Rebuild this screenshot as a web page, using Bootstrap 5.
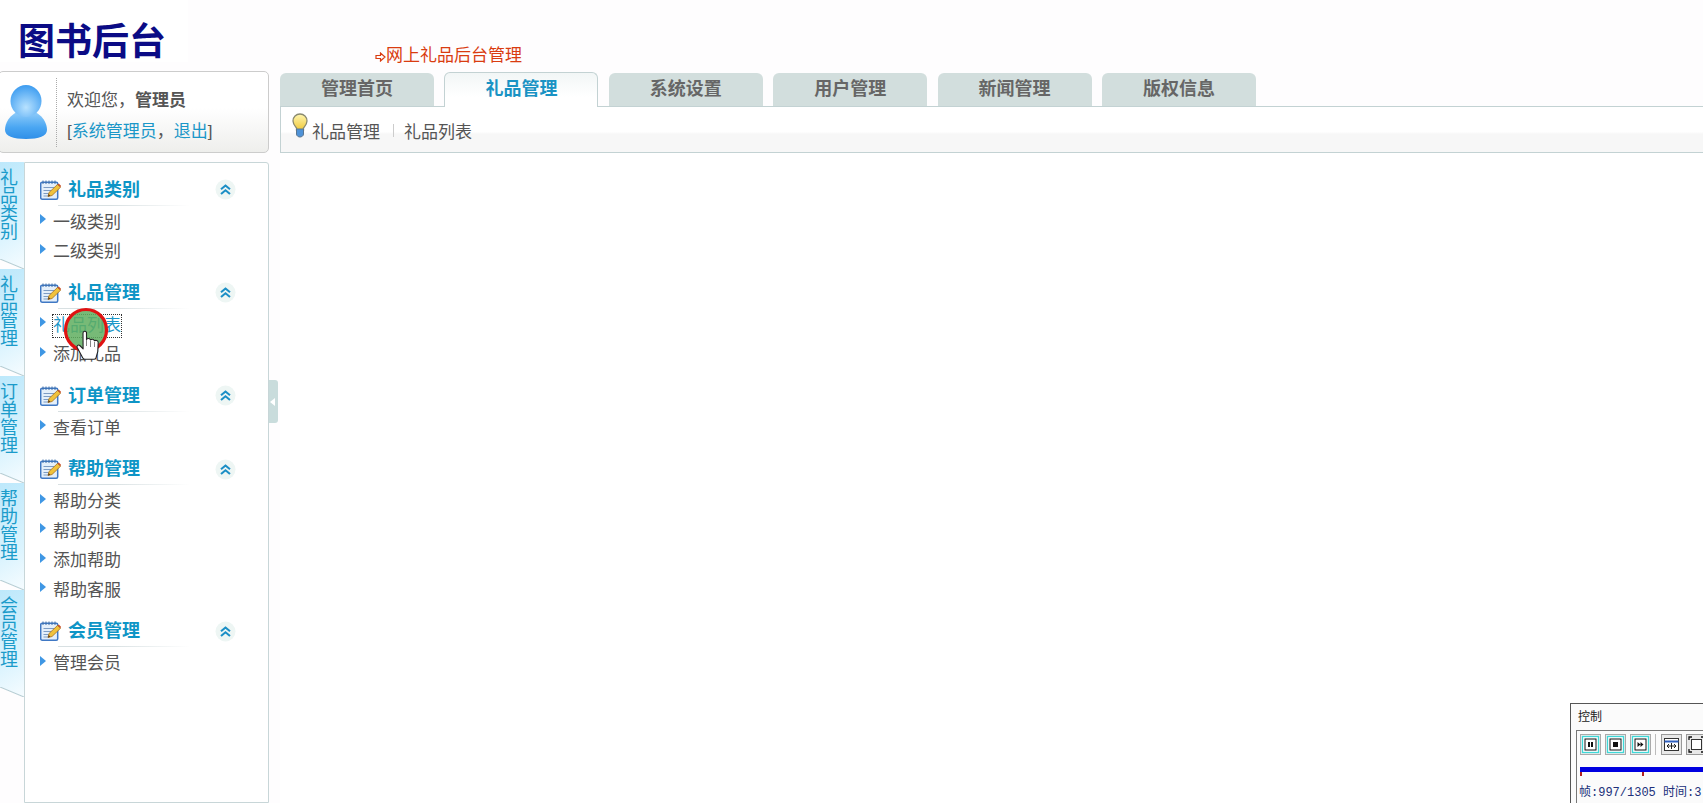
<!DOCTYPE html>
<html lang="zh">
<head>
<meta charset="utf-8">
<title>图书后台</title>
<link href="https://cdn.jsdelivr.net/npm/bootstrap@5.3.0/dist/css/bootstrap.min.css" rel="stylesheet">
<style>
html,body{height:803px;overflow:hidden}
body{background:#fefdfe;font-family:"Liberation Sans","Noto Sans CJK SC",sans-serif;font-size:17px;color:#555;position:relative}
.sprites{width:0;height:0;display:block}
.shell{height:803px}
.left-col{width:271px;margin-left:-2px;flex:none}
.logo-box{width:190px;height:62px;background:#fff;padding:24px 0 0 20px;margin-bottom:9px;font-size:37px;line-height:37px;font-weight:700;color:#0b0b85;white-space:nowrap}
.user-box{height:82px;border:1px solid #ccc;border-radius:5px;background:linear-gradient(#fff 45%,#eeeeec);padding-left:5px}
.avatar{width:44px;height:56px;margin-top:12px;flex:none}
.user-text{border-left:1px dotted #aaa;margin:6px 0 5px 8px;padding-left:10px;line-height:31px;padding-top:7px;white-space:nowrap}
.user-text b{color:#555}
.user-text a{color:#1b97c8;text-decoration:none}
.side{height:641px;margin-top:9px;margin-left:2px}
.strip{width:24px;flex:none}
.strip-tab{height:107px;padding-top:6px;position:relative;background:linear-gradient(150deg,#bde8fb,#dcf4fe 65%,#f6fcff);color:#1b9bca;font-size:18px}
.strip-tab::after{content:"";position:absolute;left:0;right:0;bottom:0;height:10px;background:linear-gradient(to top right,#fefdfe calc(50% - 1px),#b5ccd2 50%,transparent calc(50% + 1px))}
.strip-text{writing-mode:vertical-rl;text-orientation:upright;line-height:18px;margin-left:-2px;white-space:nowrap;display:block}
.panel{flex:1;border:1px solid #c8d6d8;border-radius:0 3px 0 0;background:#fff;padding:11.500px 32px 0 15px}
.grp{margin-bottom:11px}
.grp-head{height:30px}
.grp-title{font-size:18px;font-weight:700;color:#0e95c6;line-height:30px;margin-left:7px}
.note-ic{width:21px;height:20px;flex:none}
.chev-ic{width:21px;height:21px;flex:none;margin-left:auto}
.grp-line{height:1px;margin:0 0 2px 18px;width:132px;background:linear-gradient(90deg,#d8e0e2,#d8e0e2 40%,#fff)}
.grp-list{margin:0}
.grp-list li{height:29.5px;padding-left:13px;position:relative;white-space:nowrap}
.grp-list li::before{content:"";position:absolute;left:0;top:6.500px;border-left:6px solid #3f97e4;border-top:5px solid transparent;border-bottom:5px solid transparent}
.grp-list a{color:#555;text-decoration:none;display:block;width:fit-content;height:22px;line-height:22px;margin-top:4px}
.grp-list li{padding-top:.1px}
.grp-list a.focus-item{outline:1px dotted #333;outline-offset:0;color:#1b97c8}
.splitter{width:9px;height:43px;margin-top:380px;flex:none;background:#c9dcdc;border-radius:0 3px 3px 0}
.main-col{flex:1;min-width:0;margin-left:2px;background:linear-gradient(#fefdfe 106px,#fff 106px)}
.top-title{padding:43px 0 0 95px;height:72px;line-height:26px;color:#d93c10;white-space:nowrap}
.arrow-ic{width:11px;height:10px}
.tabs{gap:10.4px;height:34px;flex-wrap:nowrap;position:relative}
.tab-item{width:154px;height:33px;margin-top:1px;background:#d2dedd;border-radius:6px 6px 0 0;text-align:center;font-size:18px;font-weight:700;line-height:33px;color:#666;text-decoration:none}
.tab-item.on{height:35px;margin-top:0;background:linear-gradient(#f2f6f6,#fff 70%);border:1px solid #c3d2d3;border-bottom:0;color:#1a93c4;line-height:32px;position:relative;z-index:1}
.crumb-bar{height:47px;border:1px solid #c3d2d3;border-right:0;background:linear-gradient(#fff 55%,#f7f7f7 60%);padding-left:11px}
.bulb-ic{width:16px;height:25px;margin-top:6px;flex:none}
.crumb{line-height:26px;margin-top:13px;color:#555}
.crumb-sep{width:1px;height:13px;background:#ccc;margin:17px 10px 0 13px}
.click-mark{position:absolute;left:63px;top:306px;width:48px;height:60px;pointer-events:none}
.ctl-win{position:absolute;left:1570px;top:703px;width:150px;height:100px;border:1px solid #555;border-bottom:0;background:#fbfbfb;padding:5px 5px 0;font-size:12px;color:#222;overflow:hidden}
.ctl-title{line-height:16px;padding:0 2px;margin-bottom:5px}
.ctl-inner{border:1px solid #777;border-bottom:0;height:80px;padding:3px 3px}
.ctl-btn{width:21px;height:21px;display:block;flex:none}
.ctl-sep{width:2px;height:21px;border-left:1px solid #bbb;margin:0 4px 0 4px}
.ctl-track{height:5px;background:#0000e0;margin-top:12px}
.ctl-ticks{height:5px;position:relative}
.ctl-ticks i{position:absolute;top:0;width:2px;height:4px;background:#b02020}
.ctl-info{font-family:"Liberation Mono","Noto Sans CJK SC",monospace;color:#20307a;line-height:14px;margin-top:9px;white-space:nowrap;margin-left:-1px}
</style>
</head>
<body>
<svg class="sprites" aria-hidden="true">
  <defs>
    <radialGradient id="headG" cx="50%" cy="70%" r="70%"><stop offset="0" stop-color="#b8e2ff"/><stop offset="1" stop-color="#3c9cf0"/></radialGradient>
    <linearGradient id="bodyG" x1="0" y1="0" x2="0" y2="1"><stop offset="0" stop-color="#9ad2fb"/><stop offset=".6" stop-color="#4aa6f2"/><stop offset="1" stop-color="#2f8fe8"/></linearGradient>
    <linearGradient id="bulbG" x1="0" y1="0" x2="0" y2="1"><stop offset="0" stop-color="#fff6b0"/><stop offset="1" stop-color="#f0c93a"/></linearGradient>
    <symbol id="noteS" viewBox="0 0 21 20">
      <rect x=".7" y="2.200" width="17" height="17" rx="1.500" fill="#e4effa" stroke="#3f78c4" stroke-width="1.500"/>
      <path d="M3 .5v3.500M6 .5v3.500M9 .5v3.500M12 .5v3.500M15 .5v3.500" stroke="#3f6fa8" stroke-width="1"/>
      <path d="M3.500 7.500h11M3.500 10.500h8M3.500 13.500h6M3.500 16h5" stroke="#7d9cc4" stroke-width="1"/>
      <path d="M8 16.500l1-4L17.500 4.500l3 2.800L12 15.500z" fill="#f0c23c" stroke="#a8701c" stroke-width=".8"/>
      <path d="M17.500 4.500l3 2.800 .5-1.600-2.200-2.200z" fill="#c8502a"/>
      <path d="M8 16.500l.6-2.400 1.800 1.700z" fill="#5a3c1c"/>
    </symbol>
    <symbol id="chevS" viewBox="0 0 21 21">
      <circle cx="10.500" cy="10.500" r="10" fill="#eef6f4"/>
      <path d="M6 10.200l4.500-3.700 4.500 3.700M6 15l4.500-3.700L15 15" fill="none" stroke="#1c8fc6" stroke-width="2.100"/>
    </symbol>
  </defs>
</svg>

<div class="shell d-flex">
  <div class="left-col d-flex flex-column">
    <div class="logo-box">图书后台</div>
    <div class="user-box d-flex">
      <svg class="avatar" viewBox="0 0 44 56">
        <path d="M22 26C10 26 1 36 1 46c0 6 8 9 21 9s21-3 21-9c0-10-9-20-21-20z" fill="url(#bodyG)"/>
        <ellipse cx="22" cy="17" rx="15.500" ry="16" fill="url(#headG)"/>
      </svg>
      <div class="user-text">欢迎您，<b>管理员</b><br>[<a href="#">系统管理员</a>，<a href="#">退出</a>]</div>
    </div>
    <div class="side d-flex">
      <div class="strip">
        <div class="strip-tab"><span class="strip-text">礼品类别</span></div>
        <div class="strip-tab"><span class="strip-text">礼品管理</span></div>
        <div class="strip-tab"><span class="strip-text">订单管理</span></div>
        <div class="strip-tab"><span class="strip-text">帮助管理</span></div>
        <div class="strip-tab"><span class="strip-text">会员管理</span></div>
      </div>
      <div class="panel">
        <div class="grp">
          <div class="grp-head d-flex align-items-center"><svg class="note-ic"><use href="#noteS"/></svg><span class="grp-title">礼品类别</span><svg class="chev-ic"><use href="#chevS"/></svg></div>
          <div class="grp-line"></div>
          <ul class="grp-list list-unstyled"><li><a href="#">一级类别</a></li><li><a href="#">二级类别</a></li></ul>
        </div>
        <div class="grp">
          <div class="grp-head d-flex align-items-center"><svg class="note-ic"><use href="#noteS"/></svg><span class="grp-title">礼品管理</span><svg class="chev-ic"><use href="#chevS"/></svg></div>
          <div class="grp-line"></div>
          <ul class="grp-list list-unstyled"><li><a href="#" class="focus-item">礼品列表</a></li><li><a href="#">添加礼品</a></li></ul>
        </div>
        <div class="grp">
          <div class="grp-head d-flex align-items-center"><svg class="note-ic"><use href="#noteS"/></svg><span class="grp-title">订单管理</span><svg class="chev-ic"><use href="#chevS"/></svg></div>
          <div class="grp-line"></div>
          <ul class="grp-list list-unstyled"><li><a href="#">查看订单</a></li></ul>
        </div>
        <div class="grp">
          <div class="grp-head d-flex align-items-center"><svg class="note-ic"><use href="#noteS"/></svg><span class="grp-title">帮助管理</span><svg class="chev-ic"><use href="#chevS"/></svg></div>
          <div class="grp-line"></div>
          <ul class="grp-list list-unstyled"><li><a href="#">帮助分类</a></li><li><a href="#">帮助列表</a></li><li><a href="#">添加帮助</a></li><li><a href="#">帮助客服</a></li></ul>
        </div>
        <div class="grp">
          <div class="grp-head d-flex align-items-center"><svg class="note-ic"><use href="#noteS"/></svg><span class="grp-title">会员管理</span><svg class="chev-ic"><use href="#chevS"/></svg></div>
          <div class="grp-line"></div>
          <ul class="grp-list list-unstyled"><li><a href="#">管理会员</a></li></ul>
        </div>
      </div>
    </div>
  </div>
  <div class="splitter d-flex align-items-center">
    <svg width="7" height="10" viewBox="0 0 7 10"><path d="M1 5l5-4v8z" fill="#fff"/></svg>
  </div>
  <div class="main-col">
    <div class="top-title"><svg class="arrow-ic" viewBox="0 0 11 10"><path d="M1 3.500h4.500V1L10 5 5.500 9V6.500H1z" fill="none" stroke="#d93c10" stroke-width="1.200"/></svg>网上礼品后台管理</div>
    <nav class="nav tabs">
      <a class="tab-item" href="#">管理首页</a>
      <a class="tab-item on" href="#">礼品管理</a>
      <a class="tab-item" href="#">系统设置</a>
      <a class="tab-item" href="#">用户管理</a>
      <a class="tab-item" href="#">新闻管理</a>
      <a class="tab-item" href="#">版权信息</a>
    </nav>
    <div class="crumb-bar d-flex">
      <svg class="bulb-ic" viewBox="0 0 16 25">
        <path d="M8 1C4 1 1 4 1 8c0 3 2 5 3.500 7v2h7v-2C13 13 15 11 15 8c0-4-3-7-7-7z" fill="url(#bulbG)" stroke="#8a8a70" stroke-width="1.300"/>
        <path d="M4.500 16h7v5c0 2-2 3-3.500 3s-3.500-1-3.500-3z" fill="#4f93d8" stroke="#5a7690" stroke-width="1"/>
      </svg>
      <span class="crumb ms-1">礼品管理</span>
      <span class="crumb-sep"></span>
      <span class="crumb">礼品列表</span>
    </div>
  </div>
</div>

<svg class="click-mark" viewBox="0 0 48 60">
  <circle cx="23" cy="24" r="20.500" fill="#5fae5f" fill-opacity=".85" stroke="#e01212" stroke-width="3.200"/>
  <g transform="translate(-1 2)">
  <path d="M21 25c0-2 3-2.500 3.500-.5v7c.8-1.500 3.500-1.300 4 .5 1-1.300 3.500-1 4 .8 1.200-.9 3.500-.4 3.700 1.500l-.4 9-1.800 6.500c-.3 1-1 1.500-2 1.500h-9c-1 0-1.700-.5-2.200-1.400l-5.600-10.400c-.9-1.800 1.200-3.300 2.600-2l3.300 3.300z" fill="#fff" stroke="#222" stroke-width="1.100" stroke-linejoin="round"/>
  <path d="M24.500 32v6M28.500 33v6M32.500 34v5" stroke="#777" stroke-width=".9"/>
  </g>
</svg>

<div class="ctl-win">
  <div class="ctl-title">控制</div>
  <div class="ctl-inner">
    <div class="d-flex gap-0">
      <svg class="ctl-btn" viewBox="0 0 21 21"><rect x=".5" y=".5" width="20" height="20" fill="#eee" stroke="#aaa"/><rect x="2.500" y="2.500" width="16" height="16" fill="#fff" stroke="#3fd8d8" stroke-width="1.300"/><rect x="5" y="5" width="11" height="11" fill="#fff" stroke="#111"/><path d="M8 8h2v5H8zM11 8h2v5h-2z" fill="#111"/></svg>
      <svg class="ctl-btn ms-1" viewBox="0 0 21 21"><rect x=".5" y=".5" width="20" height="20" fill="#eee" stroke="#aaa"/><rect x="2.500" y="2.500" width="16" height="16" fill="#fff" stroke="#3fd8d8" stroke-width="1.300"/><rect x="5" y="5" width="11" height="11" fill="#fff" stroke="#111"/><rect x="8" y="8" width="5" height="5" fill="#111"/></svg>
      <svg class="ctl-btn ms-1" viewBox="0 0 21 21"><rect x=".5" y=".5" width="20" height="20" fill="#eee" stroke="#aaa"/><rect x="2.500" y="2.500" width="16" height="16" fill="#fff" stroke="#3fd8d8" stroke-width="1.300"/><rect x="5" y="5" width="11" height="11" fill="#fff" stroke="#111"/><path d="M7.500 8l3 2.500-3 2.500zM10.500 8l3 2.500-3 2.500z" fill="#111"/></svg>
      <span class="ctl-sep"></span>
      <svg class="ctl-btn" viewBox="0 0 21 21"><rect x=".5" y=".5" width="20" height="20" fill="#e8e8e8" stroke="#999"/><rect x="3.500" y="4.500" width="14" height="12" fill="#fff" stroke="#333"/><path d="M3.500 7.500h14" stroke="#3060c0" stroke-width="2"/><path d="M6 12h9M6 12l2-2M6 12l2 2M15 12l-2-2M15 12l-2 2M10.500 9v6" stroke="#222" fill="none"/></svg>
      <svg class="ctl-btn ms-1" viewBox="0 0 21 21"><rect x=".5" y=".5" width="20" height="20" fill="#e8e8e8" stroke="#999"/><rect x="5.500" y="5.500" width="10" height="10" fill="#fff" stroke="#333"/><path d="M3 6V3h3M15 3h3v3M3 15v3h3M18 15v3h-3" stroke="#111" fill="none" stroke-width="1.300"/></svg>
    </div>
    <div class="ctl-track"></div>
    <div class="ctl-ticks"><i style="left:0"></i><i style="left:62px"></i></div>
    <div class="ctl-info">帧:997/1305 时间:3</div>
  </div>
</div>
<script src="https://cdn.jsdelivr.net/npm/bootstrap@5.3.0/dist/js/bootstrap.bundle.min.js"></script>
</body>
</html>
